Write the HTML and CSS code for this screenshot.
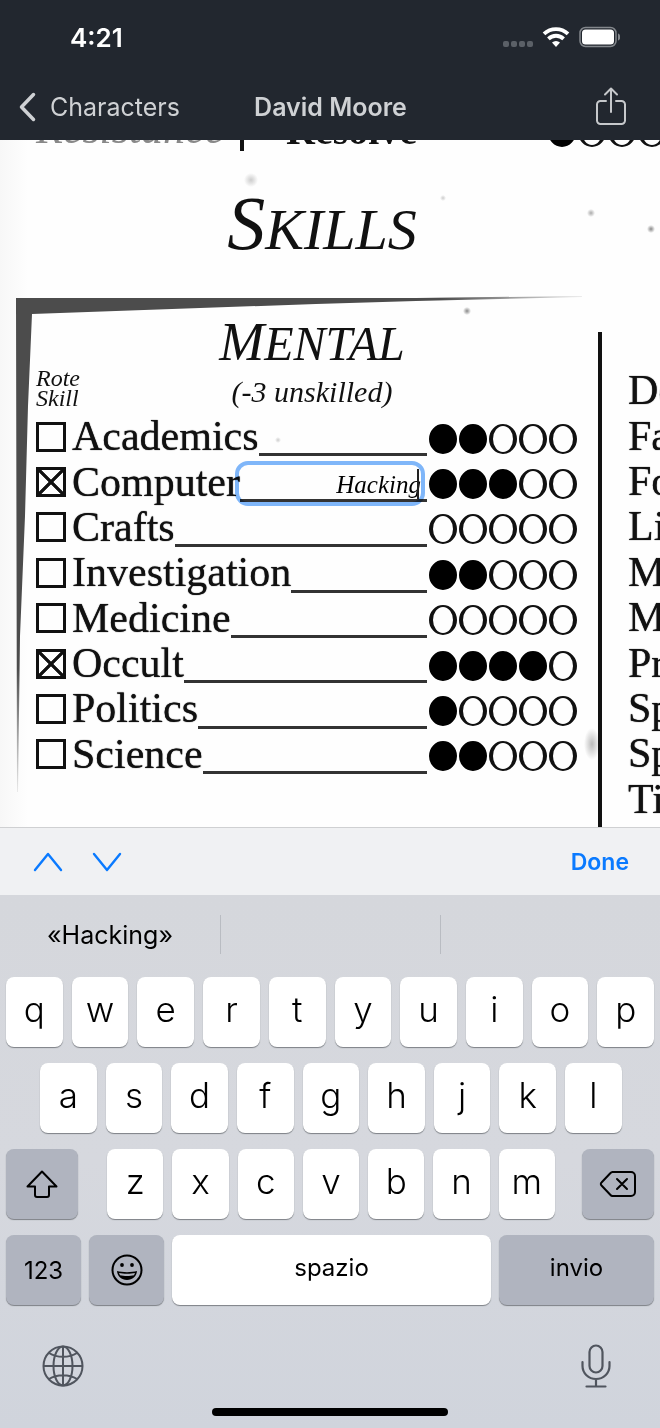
FILE: index.html
```html
<!DOCTYPE html>
<html lang="it">
<head>
<meta charset="utf-8">
<meta name="viewport" content="width=device-width, initial-scale=1">
<title>David Moore</title>
<link rel="stylesheet" href="styles.css">
</head>
<body>
<div class="app">
  <header class="top">
    <div class="status">
      <span class="time">4:21</span>
      <svg class="status-icons" width="120" height="24" viewBox="0 0 120 24" aria-hidden="true">
        <g fill="#5b6067"><rect x="3" y="16" width="6" height="6" rx="2"/><rect x="11" y="16" width="6" height="6" rx="2"/><rect x="19" y="16" width="6" height="6" rx="2"/><rect x="27" y="16" width="6" height="6" rx="2"/></g>
        <g fill="none" stroke="#fff" stroke-width="3.8"><path d="M44 8.800a17.500 17.500 0 0 1 24 0"/><path d="M48.400 13.800a11 11 0 0 1 15.200 0"/></g>
        <path d="M52 17.500a6 6 0 0 1 8 0L56 22z" fill="#fff"/>
        <rect x="80" y="2.500" width="36" height="19" rx="5.500" fill="none" stroke="#83878c" stroke-width="1.500"/>
        <rect x="82" y="4.500" width="32" height="15" rx="3.500" fill="#fff"/>
        <path d="M118 8.500c3 1 3 6 0 7z" fill="#83878c"/>
      </svg>
    </div>
    <nav class="nav">
      <a class="back" href="#characters">
        <svg width="20" height="32" viewBox="0 0 20 32" aria-hidden="true"><path d="M15.500 3.500L3.500 16l12 12.500" fill="none" stroke="#cfd1d4" stroke-width="3.500" stroke-linecap="round" stroke-linejoin="round"/></svg>
        Characters
      </a>
      <h1 class="title">David Moore</h1>
      <button class="share" type="button" aria-label="Share">
        <svg width="32" height="40" viewBox="0 0 32 40" aria-hidden="true"><path d="M11 14H5.500a3.500 3.500 0 0 0-3.500 3.500v16A3.500 3.500 0 0 0 5.500 37h21a3.500 3.500 0 0 0 3.500-3.500v-16a3.500 3.500 0 0 0-3.500-3.500H21M16 25V1.500M10 7.500l6-6 6 6" fill="none" stroke="#c6c8cb" stroke-width="2" stroke-linecap="round" stroke-linejoin="round"/></svg>
      </button>
    </nav>
  </header>

  <main class="sheet">
    <div class="attribute">
      <span class="attribute-group">Resistance</span>
      <span class="attribute-bar"></span>
      <span class="attribute-name">Resolve</span>
      <span class="dots"><input type="checkbox" aria-label="Resolve 1" checked><input type="checkbox" aria-label="Resolve 2"><input type="checkbox" aria-label="Resolve 3"><input type="checkbox" aria-label="Resolve 4"></span>
    </div>
    <h2 class="heading">Skills</h2>
    <div class="columns">
      <section class="panel">
        <svg class="frame" viewBox="0 0 566 496" preserveAspectRatio="none" aria-hidden="true">
          <defs>
            <linearGradient id="fadeX"><stop offset=".75" stop-color="#4c4c4c"/><stop offset="1" stop-color="#4c4c4c" stop-opacity=".1"/></linearGradient>
            <linearGradient id="fadeY" x2="0" y2="1"><stop offset=".75" stop-color="#4c4c4c"/><stop offset="1" stop-color="#4c4c4c" stop-opacity=".1"/></linearGradient>
          </defs>
          <path d="M0 2L400 2 566 0v1L400 5 300 8 16 18H0z" fill="url(#fadeX)"/>
          <path d="M0 2H16V18L12 110 9 220 4 340 2 496H1z" fill="url(#fadeY)"/>
        </svg>
        <h3 class="group">Mental</h3>
        <div class="notes"><span class="rote">Rote<br>Skill</span><span class="penalty">(-3 unskilled)</span></div>
        <ul class="skills">
          <li class="skill"><input class="tick" type="checkbox" id="s1"><label for="s1">Academics</label><span class="spec"><input type="text" aria-label="Academics specialty"></span><span class="dots"><input type="checkbox" aria-label="Academics 1" checked><input type="checkbox" aria-label="Academics 2" checked><input type="checkbox" aria-label="Academics 3"><input type="checkbox" aria-label="Academics 4"><input type="checkbox" aria-label="Academics 5"></span></li>
          <li class="skill"><input class="tick" type="checkbox" id="s2" checked><label for="s2">Computer</label><span class="spec active"><input type="text" aria-label="Computer specialty" value="Hacking"></span><span class="dots"><input type="checkbox" aria-label="Computer 1" checked><input type="checkbox" aria-label="Computer 2" checked><input type="checkbox" aria-label="Computer 3" checked><input type="checkbox" aria-label="Computer 4"><input type="checkbox" aria-label="Computer 5"></span></li>
          <li class="skill"><input class="tick" type="checkbox" id="s3"><label for="s3">Crafts</label><span class="spec"><input type="text" aria-label="Crafts specialty"></span><span class="dots"><input type="checkbox" aria-label="Crafts 1"><input type="checkbox" aria-label="Crafts 2"><input type="checkbox" aria-label="Crafts 3"><input type="checkbox" aria-label="Crafts 4"><input type="checkbox" aria-label="Crafts 5"></span></li>
          <li class="skill"><input class="tick" type="checkbox" id="s4"><label for="s4">Investigation</label><span class="spec"><input type="text" aria-label="Investigation specialty"></span><span class="dots"><input type="checkbox" aria-label="Investigation 1" checked><input type="checkbox" aria-label="Investigation 2" checked><input type="checkbox" aria-label="Investigation 3"><input type="checkbox" aria-label="Investigation 4"><input type="checkbox" aria-label="Investigation 5"></span></li>
          <li class="skill"><input class="tick" type="checkbox" id="s5"><label for="s5">Medicine</label><span class="spec"><input type="text" aria-label="Medicine specialty"></span><span class="dots"><input type="checkbox" aria-label="Medicine 1"><input type="checkbox" aria-label="Medicine 2"><input type="checkbox" aria-label="Medicine 3"><input type="checkbox" aria-label="Medicine 4"><input type="checkbox" aria-label="Medicine 5"></span></li>
          <li class="skill"><input class="tick" type="checkbox" id="s6" checked><label for="s6">Occult</label><span class="spec"><input type="text" aria-label="Occult specialty"></span><span class="dots"><input type="checkbox" aria-label="Occult 1" checked><input type="checkbox" aria-label="Occult 2" checked><input type="checkbox" aria-label="Occult 3" checked><input type="checkbox" aria-label="Occult 4" checked><input type="checkbox" aria-label="Occult 5"></span></li>
          <li class="skill"><input class="tick" type="checkbox" id="s7"><label for="s7">Politics</label><span class="spec"><input type="text" aria-label="Politics specialty"></span><span class="dots"><input type="checkbox" aria-label="Politics 1" checked><input type="checkbox" aria-label="Politics 2"><input type="checkbox" aria-label="Politics 3"><input type="checkbox" aria-label="Politics 4"><input type="checkbox" aria-label="Politics 5"></span></li>
          <li class="skill"><input class="tick" type="checkbox" id="s8"><label for="s8">Science</label><span class="spec"><input type="text" aria-label="Science specialty"></span><span class="dots"><input type="checkbox" aria-label="Science 1" checked><input type="checkbox" aria-label="Science 2" checked><input type="checkbox" aria-label="Science 3"><input type="checkbox" aria-label="Science 4"><input type="checkbox" aria-label="Science 5"></span></li>
        </ul>
      </section>
      <section class="arcana">
        <ul class="arcana-list"><li>Death</li><li>Fate</li><li>Forces</li><li>Life</li><li>Matter</li><li>Mind</li><li>Prime</li><li>Space</li><li>Spirit</li><li>Time</li></ul>
      </section>
    </div>
  </main>

  <div class="toolbar">
    <button class="step" type="button" aria-label="Previous field"><svg width="30" height="20" viewBox="0 0 30 20" aria-hidden="true"><path d="M2 18L15 2l13 16" fill="none" stroke="#0a7aff" stroke-width="2.400" stroke-linecap="round" stroke-linejoin="round"/></svg></button>
    <button class="step" type="button" aria-label="Next field"><svg width="30" height="20" viewBox="0 0 30 20" aria-hidden="true"><path d="M2 2l13 16L28 2" fill="none" stroke="#0a7aff" stroke-width="2.400" stroke-linecap="round" stroke-linejoin="round"/></svg></button>
    <button class="done" type="button">Done</button>
  </div>

  <section class="keyboard" aria-label="Keyboard">
    <div class="suggestions"><button type="button">«Hacking»</button><span></span><span></span></div>
    <div class="keys">
      <div class="row letters"><button>q</button><button>w</button><button>e</button><button>r</button><button>t</button><button>y</button><button>u</button><button>i</button><button>o</button><button>p</button></div>
      <div class="row letters inset"><button>a</button><button>s</button><button>d</button><button>f</button><button>g</button><button>h</button><button>j</button><button>k</button><button>l</button></div>
      <div class="row">
        <button class="dark side" aria-label="Shift"><svg width="34" height="30" viewBox="0 0 34 30" aria-hidden="true"><path d="M17 2.500L31.500 17.500H24V26a2 2 0 0 1-2 2H12a2 2 0 0 1-2-2v-8.500H2.500z" fill="none" stroke="#000" stroke-width="2" stroke-linejoin="round"/></svg></button>
        <div class="row letters middle"><button>z</button><button>x</button><button>c</button><button>v</button><button>b</button><button>n</button><button>m</button></div>
        <button class="dark side" aria-label="Delete"><svg width="38" height="28" viewBox="0 0 38 28" aria-hidden="true"><path d="M13.500 2H32a4 4 0 0 1 4 4v16a4 4 0 0 1-4 4H13.500a3 3 0 0 1-2-1L2.500 15.500a2 2 0 0 1 0-3L11.500 3a3 3 0 0 1 2-1zM18 9l10 10M28 9L18 19" fill="none" stroke="#000" stroke-width="2" stroke-linecap="round" stroke-linejoin="round"/></svg></button>
      </div>
      <div class="row bottom">
        <button class="dark number">123</button>
        <button class="dark number" aria-label="Emoji"><svg width="32" height="32" viewBox="0 0 32 32" aria-hidden="true"><circle cx="16" cy="16" r="14.500" fill="none" stroke="#000" stroke-width="2"/><circle cx="11" cy="11" r="1.900"/><circle cx="21" cy="11" r="1.900"/><path d="M6 17c5 1.500 15 1.500 20 0-.5 5.500-4.500 9-10 9s-9.500-3.500-10-9z"/><path d="M8 18.900c4 1 12 1 16 0l-1 2.400c-4 1-10 1-14 0z" fill="#b0b4be"/></svg></button>
        <button class="space">spazio</button>
        <button class="dark">invio</button>
      </div>
    </div>
    <div class="system">
      <button type="button" aria-label="Next keyboard"><svg width="42" height="42" viewBox="0 0 42 42" aria-hidden="true"><g fill="none" stroke="#50555e" stroke-width="2"><circle cx="21" cy="21" r="19.500"/><ellipse cx="21" cy="21" rx="9.500" ry="19.500"/><path d="M21 1.500v39M1.500 21h39M7 8c8 5 20 5 28 0M7 34c8-5 20-5 28 0"/></g></svg></button>
      <button type="button" aria-label="Dictate"><svg width="30" height="44" viewBox="0 0 30 44" aria-hidden="true"><g fill="none" stroke="#50555e" stroke-width="2.200" stroke-linecap="round"><rect x="8.500" y="1.500" width="13" height="27" rx="6.500"/><path d="M1.500 18v4a13.500 13 0 0 0 27 0v-4M15 35v7.500M5.500 42.500h19"/></g></svg></button>
    </div>
    <div class="home"></div>
  </section>
</div>
</body>
</html>
```
FILE: styles.css
```css
* { box-sizing: border-box; }

body {
  margin: 0;
  font-family: Inter, "Liberation Sans", sans-serif;
  color: #000;
}

h1, h2, h3, ul { margin: 0; padding: 0; font-weight: 400; }
ul { list-style: none; }
button { margin: 0; padding: 0; border: 0; background: none; font: inherit; color: inherit; }
svg { display: block; }
input { margin: 0; }

.app {
  display: flex;
  flex-direction: column;
  min-height: 100vh;
  overflow: hidden;
}

/* Status and navigation bars */
.top { background: #22272f; color: #cfd1d4; }
.status {
  display: flex;
  justify-content: space-between;
  align-items: center;
  height: 74px;
  padding: 0 40px 0 70px;
}
.time { font-size: 26px; font-weight: 600; color: #fff; }
.nav {
  display: grid;
  grid-template-columns: 1fr auto 1fr;
  align-items: center;
  height: 66px;
  padding: 0 33px 0 18px;
}
.back {
  display: flex;
  align-items: center;
  gap: 12px;
  font-size: 25px;
  color: inherit;
  text-decoration: none;
}
.title { padding-left: 16px; font-size: 25px; font-weight: 600; }
.share { justify-self: end; }

/* Character sheet */
.sheet {
  display: flex;
  flex: 1;
  flex-direction: column;
  overflow: hidden;
  font-family: "Liberation Serif", serif;
  color: #111;
  background:
    radial-gradient(circle at 251px 40px, #ccc 0, transparent 7px),
    radial-gradient(circle at 467px 171px, #888 0, transparent 4px),
    radial-gradient(circle at 651px 89px, #888 0, transparent 4px),
    radial-gradient(circle at 591px 73px, #aaa 0, transparent 4px),
    radial-gradient(circle at 443px 58px, #ccc 0, transparent 3px),
    radial-gradient(circle at 278px 300px, #ccc 0, transparent 3px),
    radial-gradient(ellipse 8px 16px at 592px 604px, #bbb, transparent),
    linear-gradient(90deg, #f7f7f7, #fefefe 28px);
}
.attribute {
  display: grid;
  grid-template-columns: 204px 46px 1fr 112px;
  align-content: end;
  align-items: end;
  height: 11px;
  padding-left: 36px;
  overflow: hidden;
  font-size: 40px;
  line-height: 40px;
}
.attribute-group { padding-bottom: 2px; font-size: 44px; font-style: italic; color: #888; }
.attribute-bar { width: 4px; height: 11px; background: #111; }
.attribute-name { font-weight: 700; }
.heading, .group {
  text-align: center;
  text-transform: uppercase;
  font-style: italic;
}
.heading {
  margin: 39px 0 26px;
  padding-right: 16px;
  font-size: 58px;
  line-height: 80px;
}
.heading::first-letter { font-size: 76px; line-height: 40px; }
.group {
  padding-left: 11px;
  font-size: 48px;
  line-height: 48px;
}
.group::first-letter { font-size: 54px; line-height: 30px; }
.columns {
  display: grid;
  flex: 1;
  grid-template-columns: 1fr 62px;
}
.panel { position: relative; padding: 24px 21px 0 36px; }
.frame { position: absolute; top: 0; left: 16px; width: calc(100% - 32px); height: 496px; }
.notes {
  display: grid;
  grid-template-columns: 1fr auto 1fr;
  align-items: end;
  padding-left: 11px;
  margin-bottom: 6px;
  font-style: italic;
}
.rote { margin-left: -11px; font-size: 24px; line-height: 20px; }
.penalty { font-size: 30px; line-height: 32px; }

.skills { display: grid; grid-template-rows: repeat(8, 1fr); min-height: 363px; }
.skill { display: flex; align-items: center; }
.skill label, .arcana-list li {
  padding-bottom: 1px;
  font-size: 42px;
  line-height: 42px;
  white-space: nowrap;
  text-shadow: 0 0 1px #111;
}
.tick {
  flex: none;
  appearance: none;
  width: 30px;
  height: 30px;
  margin-right: 6px;
  border: 3px solid #111;
}
.tick:checked {
  background:
    linear-gradient(45deg, transparent 45%, #111 46%, #111 54%, transparent 55%),
    linear-gradient(135deg, transparent 45%, #111 46%, #111 54%, transparent 55%);
}
.spec {
  position: relative;
  display: flex;
  flex: 1;
  align-items: flex-end;
  align-self: stretch;
  min-width: 0;
  margin-bottom: 3px;
  border-bottom: 3px solid #333;
}
.spec input {
  width: 100%;
  height: 28px;
  padding: 0 6px 0 0;
  border: 0;
  background: none;
  text-align: right;
  font: italic 25px "Liberation Serif", serif;
  color: #000;
}
.spec.active::after {
  content: "";
  position: absolute;
  inset: 2px 2px -7px -5px;
  border: 4px solid #80b7fa;
  border-radius: 13px;
  mix-blend-mode: multiply;
}
.spec.active::before {
  content: "";
  position: absolute;
  right: 8px;
  bottom: 0;
  width: 2px;
  height: 30px;
  background: #222;
}
.dots { display: flex; flex: none; gap: 2px; margin-left: 2px; padding-top: 4px; }
.attribute .dots { margin-left: 0; padding-bottom: 4px; }
.dots input {
  flex: none;
  appearance: none;
  width: 28px;
  height: 30px;
  border: solid #111;
  border-width: 2px 4px;
  border-radius: 50%;
}
.dots input:checked { background: #000; border-color: #000; }

.arcana {
  margin-top: 36px;
  padding: 36px 0 0 26px;
  border-left: 4px solid #111;
  overflow: hidden;
}
.arcana-list { display: grid; grid-template-rows: repeat(10, 1fr); min-height: 454px; align-items: center; }

/* Form accessory bar */
.toolbar {
  display: flex;
  align-items: center;
  gap: 29px;
  height: 68px;
  padding: 0 31px 0 33px;
  border-top: 1px solid #cfd0d2;
  background: #f0f1f3;
}
.done { margin-left: auto; font-size: 23px; font-weight: 600; color: #0a7aff; }

/* Keyboard */
.keyboard { background: linear-gradient(#d5d7dc, #d6d8de 50%, #d0d4dc); }
.suggestions {
  display: grid;
  grid-template-columns: repeat(3, 1fr);
  padding: 20px 0 23px;
  font-size: 25px;
}
.suggestions > * { height: 39px; }
.suggestions > * + * { border-left: 1px solid #b9bcc2; }
.keys { display: grid; gap: 16px; padding: 0 6px; }
.row { display: flex; }
.row button {
  display: flex;
  align-items: center;
  justify-content: center;
  height: 70px;
  border-radius: 8px;
  background: #fff;
  box-shadow: 0 1px 1px #7d8086;
}
.row .dark { background: #b0b4bf; }
.letters { gap: 9px; }
.letters button { flex: 1; padding-bottom: 6px; font-size: 35px; font-weight: 300; }
.inset { margin: 0 5% 0 34px; }
.row .side { flex: none; width: 72px; }
.middle { flex: 1; margin: 0 27px 0 29px; }
.bottom { display: grid; grid-template-columns: 75px 75px 1fr 155px; gap: 8px; font-size: 24px; }
.bottom button { padding-bottom: 5px; }
.bottom .number { padding-bottom: 0; }
.system { display: flex; justify-content: space-between; align-items: center; padding: 39px 49px 20px 42px; }
.home { width: 236px; height: 8px; margin: 0 auto 12px; border-radius: 4px; background: #000; }
```
